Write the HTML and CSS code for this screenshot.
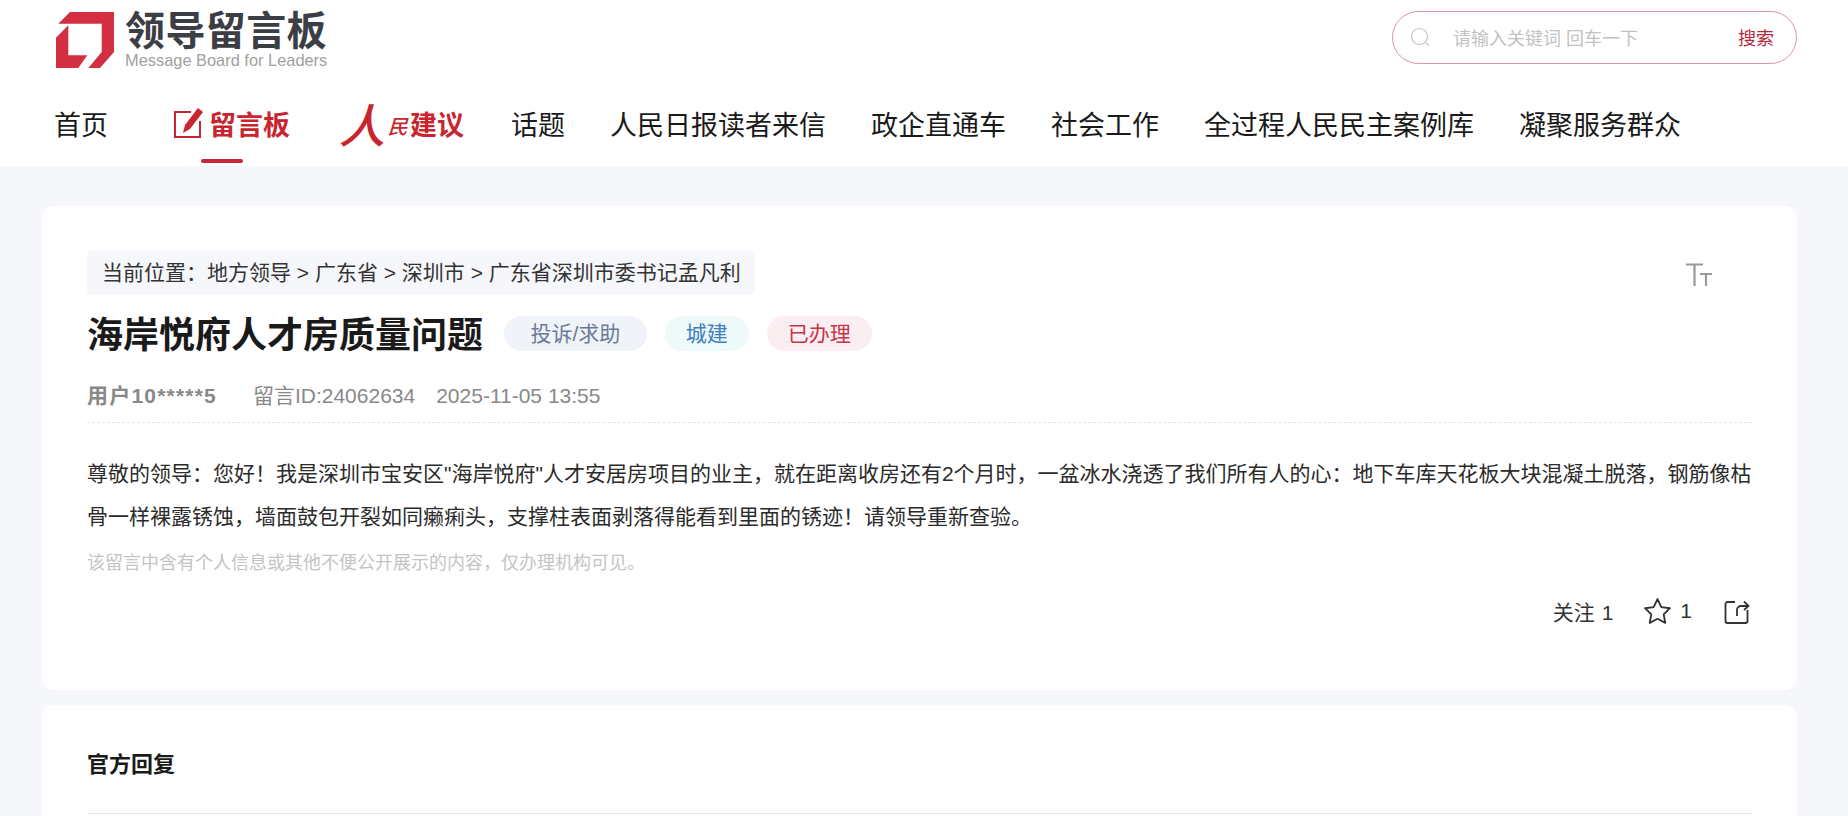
FILE: index.html
```html
<!DOCTYPE html>
<html lang="zh-CN">
<head>
  <meta charset="UTF-8">
  <title>海岸悦府人才房质量问题 - 领导留言板</title>
  <link rel="stylesheet" href="styles.css">
</head>
<body>
  <header class="header">
    <div class="header-top">
      <a class="logo" href="#">
        <svg class="logo-mark" viewBox="6 5 58 56" width="58" height="56">
          <polygon fill="#d32f43" points="8.3,16.7 20,5 64,5 64,45 50,61 38.3,61 51.7,45 51.7,16.7"/>
          <polygon fill="#d32f43" points="6,30.7 18.3,18.3 18.3,48.3 37.3,48.3 28.3,61 6,61"/>
        </svg>
        <div class="logo-text">
          <div class="logo-title">领导留言板</div>
          <div class="logo-sub">Message Board for Leaders</div>
        </div>
      </a>
      <div class="search">
        <svg class="search-icon" viewBox="0 0 20 20" width="20" height="20">
          <circle cx="9.5" cy="9.5" r="8" fill="none" stroke="#c4c4c4" stroke-width="1.2"/>
          <path d="M15.5 15.5l3 3" fill="none" stroke="#c4c4c4" stroke-width="1.2"/>
        </svg>
        <span class="search-hint">请输入关键词 回车一下</span>
        <span class="search-btn">搜索</span>
      </div>
    </div>
    <nav class="nav">
      <a class="nav-item first" href="#">首页</a>
      <a class="nav-item board" href="#">
        <svg viewBox="0 0 32 32" width="32" height="32">
          <path d="M18 5H2v25h25V14" fill="none" stroke="#c9252f" stroke-width="2"/>
          <path d="M25 1l5 4-13 17-7 4 2-8z" fill="#c9252f"/>
        </svg>
        留言板
      </a>
      <a class="nav-item idea" href="#"><span class="idea-ren">人</span><span class="idea-min">民</span>建议</a>
      <a class="nav-item" href="#">话题</a>
      <a class="nav-item" href="#">人民日报读者来信</a>
      <a class="nav-item" href="#">政企直通车</a>
      <a class="nav-item" href="#">社会工作</a>
      <a class="nav-item" href="#">全过程人民民主案例库</a>
      <a class="nav-item" href="#">凝聚服务群众</a>
    </nav>
  </header>

  <main class="main">
    <section class="card message">
      <div class="crumb-row">
        <div class="crumb">当前位置：地方领导 &gt; 广东省 &gt; 深圳市 &gt; 广东省深圳市委书记孟凡利</div>
        <svg class="font-size" viewBox="0 0 26 23" width="26" height="23">
          <path d="M0 1.5h17M8.500 1.500V23M14 11h12M20 11v12" fill="none" stroke="#999" stroke-width="2.200"/>
        </svg>
      </div>
      <div class="title-row">
        <h1>海岸悦府人才房质量问题</h1>
        <span class="tag tag-type">投诉/求助</span>
        <span class="tag tag-field">城建</span>
        <span class="tag tag-state">已办理</span>
      </div>
      <div class="meta">
        <strong>用户10*****5</strong>
        <span class="meta-id">留言ID:24062634</span>
        <span>2025-11-05 13:55</span>
      </div>
      <p class="content">尊敬的领导：您好！我是深圳市宝安区"海岸悦府"人才安居房项目的业主，就在距离收房还有2个月时，一盆冰水浇透了我们所有人的心：地下车库天花板大块混凝土脱落，钢筋像枯骨一样裸露锈蚀，墙面鼓包开裂如同癞痢头，支撑柱表面剥落得能看到里面的锈迹！请领导重新查验。</p>
      <p class="notice">该留言中含有个人信息或其他不便公开展示的内容，仅办理机构可见。</p>
      <div class="actions">
        <span class="follow">关注 1</span>
        <span class="fav">
          <svg viewBox="0 0 28 27" width="29" height="28">
            <path d="M14 2l3.700 7.700 8.300 1.100-6 5.900 1.500 8.300-7.500-4-7.500 4L8 16.700l-6-5.900 8.300-1.100z" fill="none" stroke="#333" stroke-width="1.800" stroke-linejoin="round"/>
          </svg>
          1
        </span>
        <svg class="share" viewBox="0 0 26 25" width="26" height="25">
          <path d="M11 3H3.500A2 2 0 0 0 1.500 5v17a2 2 0 0 0 2 2h18a2 2 0 0 0 2-2V11" fill="none" stroke="#333" stroke-width="1.800"/>
          <path d="M13 17v-6a4 4 0 0 1 4-4h7M20 2.500L24.500 7 20 11" fill="none" stroke="#333" stroke-width="1.800"/>
        </svg>
      </div>
    </section>

    <section class="card reply">
      <h2>官方回复</h2>
      <div class="reply-line"></div>
    </section>
  </main>
</body>
</html>
```

FILE: styles.css
```css
* {
  box-sizing: border-box;
}

html, body {
  height: 816px;
  overflow: hidden;
}

body {
  margin: 0;
  background: #f6f7fb;
  color: #222;
  font-family: "Liberation Sans", "Noto Sans CJK SC", sans-serif;
}

a {
  color: inherit;
  text-decoration: none;
}

.header {
  height: 166px;
  background: #fff;
  padding: 0 51px 0 54px;
}

.header-top {
  display: flex;
  justify-content: space-between;
  height: 88px;
  padding-top: 11px;
}

.logo {
  display: flex;
  gap: 11px;
  height: 60px;
}

.logo-mark {
  margin-top: 1px;
  margin-left: 2px;
}

.logo-title {
  font-size: 40px;
  line-height: 40px;
  font-weight: 700;
  color: #3b3e45;
  letter-spacing: 0.4px;
}

.logo-sub {
  font-size: 16.400px;
  line-height: 18px;
  color: #a0a0a0;
}

.search {
  display: flex;
  align-items: center;
  width: 405px;
  height: 53px;
  border: 1px solid #dd95a0;
  border-radius: 27px;
  padding: 0 22px 2px 17px;
}

.search-hint {
  flex: 1;
  margin-left: 23px;
  font-size: 18px;
  color: #c2c2c2;
}

.search-btn {
  font-size: 18px;
  color: #b5283c;
}

.nav {
  display: flex;
  align-items: center;
  gap: 45px;
  height: 78px;
}

.nav-item {
  position: relative;
  display: flex;
  align-items: center;
  height: 78px;
  font-size: 27px;
  color: #1a1a1a;
  white-space: nowrap;
  padding-bottom: 8px;
}

.nav-item.first {
  margin-right: 20px;
}

.board {
  gap: 4px;
  color: #c9252f;
  font-weight: 700;
}

.board::after {
  content: "";
  position: absolute;
  left: 28px;
  bottom: 3px;
  width: 42px;
  height: 4px;
  border-radius: 2px;
  background: #c8283c;
}

.idea {
  margin: 0 2px 0 9px;
  color: #c9252f;
  font-weight: 700;
}

.idea-ren {
  font-size: 46px;
  font-weight: 500;
  transform: skewX(-14deg);
}

.idea-min {
  font-size: 20px;
  font-weight: 500;
  margin-top: 4px;
  transform: skewX(-16deg);
}

.main {
  padding: 40px 51px 0 42px;
}

.card {
  background: #fff;
  border-radius: 12px;
  padding: 45px 45px 0;
}

.message {
  height: 484px;
  margin-bottom: 15px;
}

.crumb-row {
  display: flex;
  justify-content: space-between;
  align-items: flex-start;
}

.crumb {
  width: 668px;
  height: 44px;
  line-height: 44px;
  padding-left: 15px;
  font-size: 21px;
  color: #333;
  background: #f6f7fb;
  border-radius: 4px;
  white-space: nowrap;
}

.font-size {
  margin: 12px 40px 0 0;
}

.title-row {
  display: flex;
  align-items: center;
  height: 74px;
}

h1 {
  margin: 0 21px 0 0;
  font-size: 36px;
  font-weight: 700;
  color: #1a1a1a;
}

.tag {
  height: 35px;
  line-height: 35px;
  margin: 2px 18px 0 0;
  padding: 0 21px;
  border-radius: 18px;
  font-size: 21px;
}

.tag-type {
  padding: 0 26.500px;
  background: #f0f3f8;
  color: #6b7a99;
}

.tag-field {
  background: #eefaf9;
  color: #3f7fbe;
}

.tag-state {
  background: #fbeef0;
  color: #c4344a;
}

.meta {
  display: flex;
  align-items: baseline;
  height: 50px;
  margin-top: 4px;
  padding-top: 6px;
  font-size: 21px;
  color: #888;
  border-bottom: 1px dashed #e4e4e4;
}

.meta strong {
  margin-right: 36px;
  letter-spacing: 1.200px;
}

.meta-id {
  margin-right: 21px;
}

.content {
  margin: 29px 0 0;
  font-size: 21px;
  line-height: 43px;
  color: #2b2b2b;
}

.notice {
  margin: 12px 0 0;
  font-size: 18px;
  line-height: 26px;
  color: #c4c4c4;
}

.actions {
  display: flex;
  justify-content: flex-end;
  align-items: center;
  margin-top: 20px;
  padding-right: 2px;
  font-size: 21px;
  color: #333;
}

.follow {
  margin-right: 30px;
  word-spacing: 1px;
}

.fav {
  display: flex;
  align-items: center;
  gap: 8px;
  margin-right: 32px;
}

.reply {
  height: 111px;
  padding-top: 40px;
  border-radius: 12px 12px 0 0;
}

h2 {
  margin: 0;
  font-size: 22px;
  line-height: 40px;
  font-weight: 700;
  color: #1a1a1a;
}

.reply-line {
  margin-top: 28px;
  border-top: 1px solid #e4e4e4;
}
```
